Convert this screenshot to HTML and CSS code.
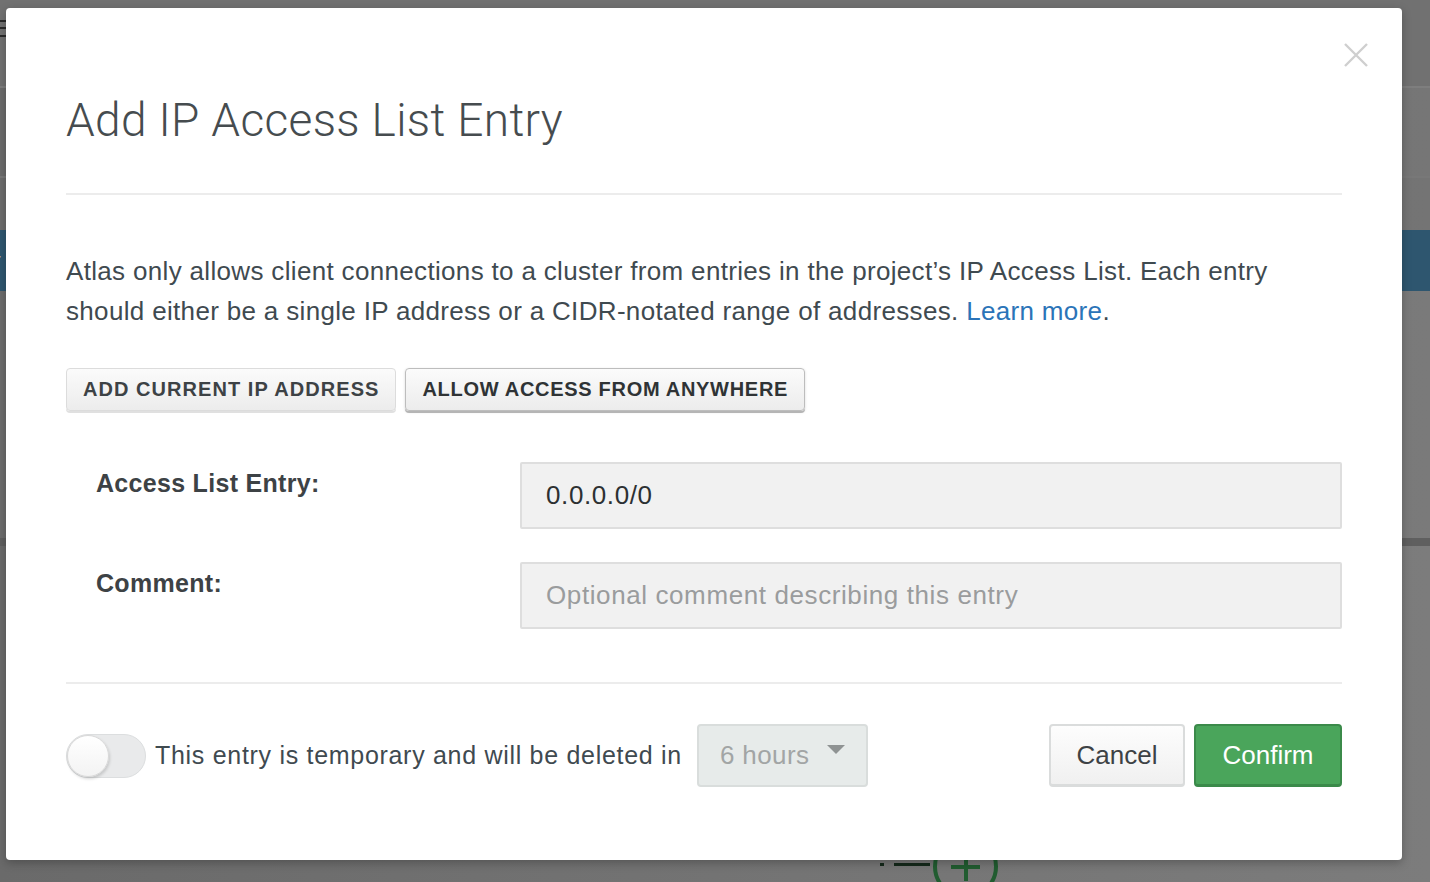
FILE: index.html
```html
<!DOCTYPE html>
<html>
<head>
<meta charset="utf-8">
<link rel="stylesheet" href="styles.css">
</head>
<body>
<div class="backdrop">
  <div class="bg-top"><span class="bg-burger"></span></div>
  <div class="bg-sub"></div>
  <div class="bg-gap"></div>
  <div class="bg-blue"><span>r</span></div>
  <div class="bg-mid"></div>
  <div class="bg-band"></div>
  <div class="bg-rest">
    <div class="bg-plus"><span class="bg-dot"></span><span class="bg-dash"></span><span class="bg-circle"></span></div>
  </div>
</div>

<div class="modal">
  <button class="close" aria-label="Close">
    <svg width="26" height="26" viewBox="0 0 26 26"><path d="M2 2 L24 24 M24 2 L2 24" stroke="#cfcfcf" stroke-width="2.4" fill="none"/></svg>
  </button>
  <h1 class="title">Add IP Access List Entry</h1>
  <hr class="divider">
  <p class="intro">Atlas only allows client connections to a cluster from entries in the project’s IP Access List. Each entry should either be a single IP address or a CIDR-notated range of addresses. <a href="#" class="link">Learn more</a>.</p>
  <div class="quick">
    <button class="btn-upper">ADD CURRENT IP ADDRESS</button>
    <button class="btn-upper active">ALLOW ACCESS FROM ANYWHERE</button>
  </div>
  <div class="form">
    <div class="row">
      <label class="label">Access List Entry:</label>
      <div class="input">0.0.0.0/0</div>
    </div>
    <div class="row">
      <label class="label">Comment:</label>
      <div class="input placeholder">Optional comment describing this entry</div>
    </div>
  </div>
  <hr class="divider lower">
  <div class="footer">
    <div class="temp">
      <span class="toggle"><span class="knob"></span></span>
      <span class="temp-text">This entry is temporary and will be deleted in</span>
      <span class="select">6 hours<span class="caret"></span></span>
    </div>
    <div class="actions">
      <button class="btn cancel">Cancel</button>
      <button class="btn confirm">Confirm</button>
    </div>
  </div>
</div>
</body>
</html>
```
FILE: styles.css
```css
* { box-sizing: border-box; }
html, body { margin: 0; padding: 0; overflow: hidden; }
body {
  width: 1430px;
  height: 882px;
  background: #6f6f6f;
  font-family: "Liberation Sans", Arial, sans-serif;
  position: relative;
}
.backdrop {
  display: flex;
  flex-direction: column;
  height: 882px;
  overflow: hidden;
}
.bg-top { height: 88px; background: #717171; border-bottom: 2px solid #7e7e7e; position: relative; flex: none; }
.bg-burger {
  position: absolute; left: 0; top: 20px; width: 6px; height: 17px;
  border-top: 2px solid #2a2a2a; border-bottom: 2px solid #2a2a2a;
}
.bg-burger::after { content: ""; position: absolute; left: 0; right: 0; top: 5px; height: 2px; background: #2a2a2a; }
.bg-sub { height: 90px; flex: none; background: linear-gradient(90deg, #6b6b6b, #767676); border-bottom: 2px solid #787878; }
.bg-gap { height: 52px; flex: none; background: linear-gradient(90deg, #6c6c6c, #747474); }
.bg-blue { height: 61px; flex: none; background: #2e566f; color: #d8d8d8; font-size: 20px; line-height: 61px; overflow: hidden; }
.bg-blue span { margin-left: -6px; }
.bg-mid { height: 247px; flex: none; background: linear-gradient(90deg, #6c6c6c, #7a7a7a); }
.bg-band { height: 8px; flex: none; background: #5f5f5f; }
.bg-rest { flex: 1; background: linear-gradient(90deg, #6a6a6a, #7c7c7c); position: relative; overflow: hidden; }
.bg-plus { position: absolute; left: 880px; top: 288px; width: 120px; height: 64px; }
.bg-dot { position: absolute; left: 0; top: 29px; width: 4px; height: 3px; background: #14281a; }
.bg-dash { position: absolute; left: 14px; top: 29px; width: 36px; height: 3px; background: #14281a; }
.bg-circle {
  position: absolute; left: 53px; top: 0;
  width: 65px; height: 65px; border-radius: 50%;
  border: 4px solid #215c30;
}
.bg-circle::before { content: ""; position: absolute; left: 14px; right: 14px; top: 27px; height: 4px; background: #215c30; }
.bg-circle::after { content: ""; position: absolute; top: 14px; bottom: 14px; left: 27px; width: 4px; background: #215c30; }

.modal {
  position: absolute;
  left: 6px; top: 8px;
  width: 1396px; height: 852px;
  background: #fff;
  border-radius: 4px;
  box-shadow: 0 3px 10px rgba(0,0,0,0.25);
  padding: 0 60px 0 60px;
  color: #464c4f;
}
.close {
  position: absolute; right: 33px; top: 34px;
  background: none; border: 0; padding: 0; width: 26px; height: 26px; cursor: pointer;
  display: block;
}
.close svg { display: block; }
.title {
  margin: 0;
  padding-top: 86px;
  font-family: Roboto, "Liberation Sans", sans-serif;
  font-weight: 300;
  font-size: 46px;
  line-height: 52px;
  color: #464c4f;
  letter-spacing: 0.35px;
}
.divider {
  border: 0;
  border-top: 2px solid #ececec;
  margin: 47px 0 0 0;
}
.intro {
  margin: 56px 0 0 0;
  font-size: 26px;
  line-height: 40px;
  color: #3f4a50;
  letter-spacing: 0.33px;
}
.link { color: #2b74b8; text-decoration: none; }
.quick { display: flex; gap: 9px; margin-top: 37px; }
.btn-upper {
  font-family: "Liberation Sans", Arial, sans-serif;
  font-weight: bold;
  font-size: 20px;
  letter-spacing: 1.05px;
  color: #3d4245;
  height: 43px;
  padding: 0 16px;
  border: 1px solid #dcdcdc;
  border-radius: 4px;
  background: linear-gradient(#fbfbfb, #ececec);
  box-shadow: 0 2px 0 #e0e0e0;
}
.btn-upper.active {
  color: #2f3335;
  border-color: #bdbdbd;
  box-shadow: 0 2px 0 #b5b5b5, 0 1px 3px rgba(0,0,0,0.15);
  padding: 0 16px;
  letter-spacing: 0.7px;
}
.form { display: flex; flex-direction: column; gap: 33px; margin-top: 51px; }
.row { display: flex; align-items: flex-start; }
.label {
  width: 454px;
  padding-left: 30px;
  font-weight: bold;
  font-size: 25px;
  letter-spacing: 0.3px;
  line-height: 42px;
  color: #3d4245;
}
.input {
  flex: 1;
  height: 67px;
  background: #f1f1f1;
  border: 2px solid #dedede;
  border-radius: 2px;
  padding: 0 24px;
  display: flex; align-items: center;
  font-size: 26px;
  letter-spacing: 0.6px;
  color: #2c3032;
}
.input.placeholder { color: #9a9c9d; }
.divider.lower { margin-top: 53px; }
.footer { display: flex; justify-content: space-between; align-items: center; margin-top: 40px; }
.temp { display: flex; align-items: center; }
.toggle {
  width: 80px; height: 44px; border-radius: 22px;
  background: #e9eaeb;
  border: 1px solid #dcdedf;
  position: relative;
  display: inline-block;
}
.knob {
  position: absolute; left: 0; top: 0;
  width: 42px; height: 42px; border-radius: 50%;
  background: linear-gradient(#ffffff, #f3f3f3);
  border: 1px solid #d9d9d9;
  box-shadow: 1px 2px 3px rgba(0,0,0,0.15);
}
.temp-text { font-size: 25px; letter-spacing: 0.7px; color: #3f4a50; margin-left: 9px; }
.select {
  margin-left: 15px;
  width: 171px; height: 63px;
  background: #e7ebea;
  border: 2px solid #d9dddc;
  border-radius: 4px;
  color: #a2a5a5;
  font-size: 26px;
  letter-spacing: 0.4px;
  display: flex; align-items: center;
  padding-left: 21px;
  position: relative;
}
.caret {
  position: absolute; right: 21px; top: 19px;
  width: 0; height: 0;
  border-left: 9px solid transparent;
  border-right: 9px solid transparent;
  border-top: 9px solid #8f9393;
}
.actions { display: flex; gap: 9px; }
.btn {
  height: 63px;
  font-family: "Liberation Sans", Arial, sans-serif;
  font-size: 26px;
  border-radius: 4px;
  padding: 0 24px;
}
.cancel {
  width: 136px;
  color: #3d4245;
  background: linear-gradient(#fdfdfd, #f0f0f0);
  border: 2px solid #dadcdc;
  border-bottom-width: 3px;
}
.confirm {
  width: 148px;
  color: #fff;
  background: #4aa55b;
  border: 2px solid #3b8a4a;
  border-bottom-width: 3px;
}
```
